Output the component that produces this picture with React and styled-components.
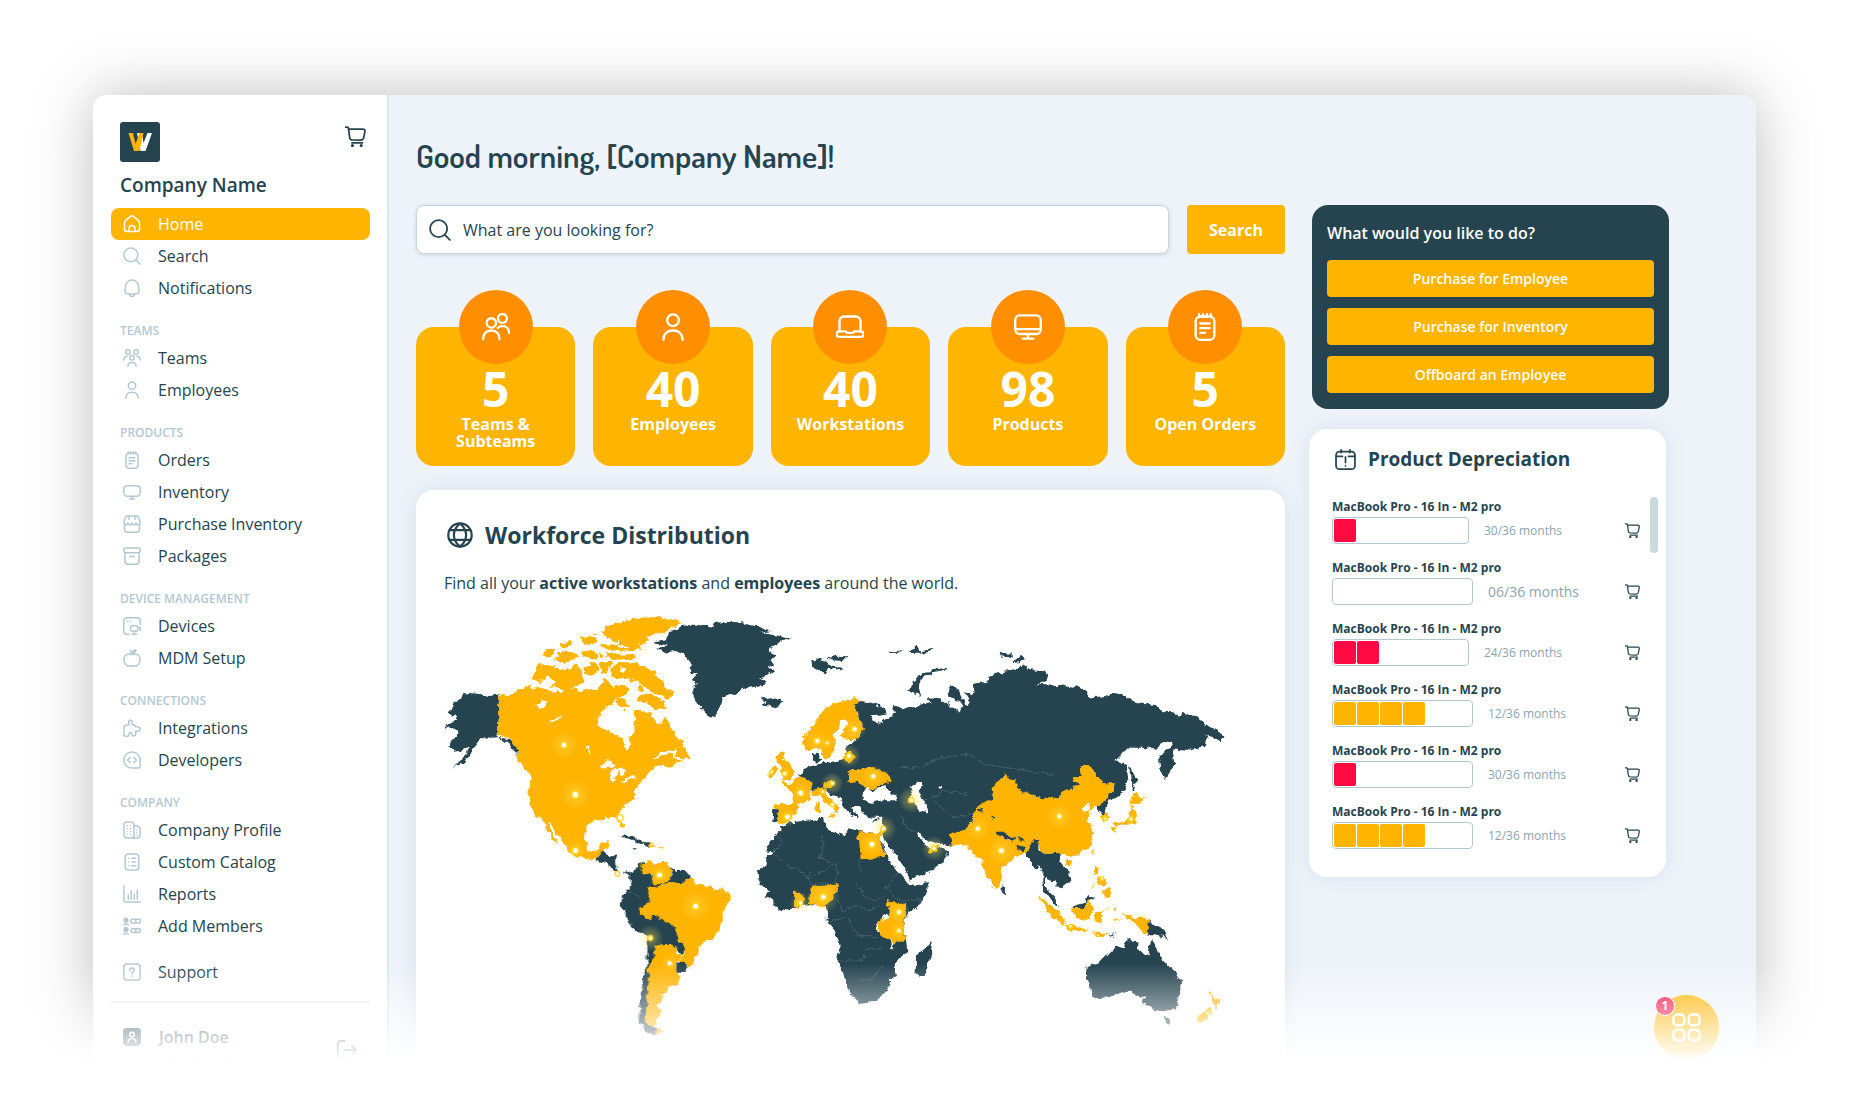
import React from "react";
import styled, { createGlobalStyle } from "styled-components";

const color = {
  ink: "#254450",
  amber: "#ffb400",
  orange: "#ff8f00",
  red: "#ff0a43",
  mist: "#b4c8d4",
  slate: "#8aa5b3",
  canvas: "#eef3fa",
};

const GlobalStyle = createGlobalStyle`
  *, *::before, *::after { box-sizing: border-box; }
  body {
    margin: 0;
    background: #fff;
    color: ${color.ink};
    font-family: "Open Sans", "Noto Sans", sans-serif;
    font-size: 16px;
  }
  h1, h2, p, ul { margin: 0; padding: 0; }
  ul { list-style: none; }
  button { font-family: inherit; border: 0; padding: 0; cursor: pointer; }
  svg { display: block; flex: none; }
`;

/* ---------- icons ---------- */

const Svg = ({ size = 18, stroke = 2, children }) => (
  <svg
    width={size}
    height={size}
    viewBox="0 0 24 24"
    fill="none"
    stroke="currentColor"
    strokeWidth={stroke}
    strokeLinecap="round"
    strokeLinejoin="round"
    aria-hidden="true"
  >
    {children}
  </svg>
);

const shapes = {
  home: (
    <>
      <path d="M2 10.5v8.2A3.3 3.3 0 0 0 5.300 22h13.400a3.300 3.300 0 0 0 3.300-3.300v-8.200a4 4 0 0 0-1.400-3L14.300 2.100a3.500 3.500 0 0 0-4.600 0L3.400 7.500a4 4 0 0 0-1.400 3Z" />
      <path d="M8 22v-4a4 4 0 0 1 8 0v4" />
    </>
  ),
  search: (
    <>
      <circle cx="10.500" cy="10.500" r="9.300" />
      <path d="m17.300 17.300 5.500 5.500" />
    </>
  ),
  bell: (
    <>
      <path d="M2.500 16.500C2.500 19 7 20 12 20s9.500-1 9.500-3.500c0-1.500-.8-2.500-.8-5.500C20.700 5 17 1.200 12 1.200S3.300 5 3.300 11c0 3-.8 4-.8 5.500Z" />
      <path d="M8.500 20.500a3.600 3.600 0 0 0 7 0" />
    </>
  ),
  teams: (
    <>
      <circle cx="6.500" cy="4" r="3" />
      <circle cx="17.500" cy="4" r="3" />
      <circle cx="12" cy="11.500" r="3" />
      <path d="M1 14.500c0-3 2-5 4.500-5M23 14.500c0-3-2-5-4.500-5M6.500 23c0-3.500 2-5 5.500-5s5.500 1.500 5.500 5" />
    </>
  ),
  person: (
    <>
      <circle cx="12" cy="6.200" r="5" />
      <path d="M3.800 23c0-5 3.200-8 8.200-8s8.200 3 8.200 8" />
    </>
  ),
  people: (
    <>
      <circle cx="8" cy="8.500" r="4" />
      <circle cx="17.500" cy="4.700" r="3.800" />
      <path d="M1 22.500c0-4.500 2.500-7.500 7-7.500s7 3 7 7.500M13.500 12.700c1-1 2.300-1.500 4-1.500 3.500 0 5.800 2.300 5.800 6" />
    </>
  ),
  orders: (
    <>
      <rect x="4" y="3" width="16" height="20" rx="4" />
      <path d="M7 1v2.500M10.300 1v2.500M13.700 1v2.500M17 1v2.500M8 9h8M8 13h8M8 17h4" />
    </>
  ),
  monitor: (
    <>
      <rect x="1" y="3.500" width="22" height="14" rx="4.500" />
      <path d="M12 17.500v3.500M8.500 21.300h7" />
    </>
  ),
  desktop: (
    <>
      <rect x="1" y="2" width="22" height="16" rx="4" />
      <path d="M1.500 13.800h21M12 18v4M7.500 22h9" />
    </>
  ),
  laptop: (
    <>
      <path d="M3 16V7a4 4 0 0 1 4-4h10a4 4 0 0 1 4 4v9" />
      <path d="M2.800 15.800h5.500l1.200 1.200h5l1.200-1.200h5.500a1.800 1.800 0 0 1 0 4.700H2.800a1.800 1.800 0 0 1 0-4.700Z" />
    </>
  ),
  shop: (
    <>
      <path d="M2 12v7a4 4 0 0 0 4 4h12a4 4 0 0 0 4-4v-7" />
      <path d="M5.500 1.200h13L21 3.500 22.800 10c0 2-1.300 3-2.800 3s-2.700-1-2.700-2.500c0 1.500-1.300 2.500-2.600 2.500S12 12 12 10.500C12 12 10.800 13 9.300 13s-2.600-1-2.600-2.500C6.700 12 5.500 13 4 13s-2.800-1-2.800-3L3 3.500ZM8 1.500V6M16 1.500V6" />
    </>
  ),
  box: (
    <>
      <rect x="1" y="1.200" width="22" height="6.500" rx="3" />
      <path d="M2.500 7.700V19a4 4 0 0 0 4 4h11a4 4 0 0 0 4-4V7.700M9 12.500h6" />
    </>
  ),
  devices: (
    <>
      <path d="M8 23H5a4 4 0 0 1-4-4V5a4 4 0 0 1 4-4h14a4 4 0 0 1 4 4v5M5 5.500h.5M9 5.500h.5" />
      <rect x="10" y="11.500" width="10" height="7.500" rx="3" />
      <path d="M15 19v4M12 23h6M20 14h3v4" />
    </>
  ),
  apple: (
    <path d="M12 7.500C9 6 1.200 6 1.200 14c0 5 3.300 9 7 9 1.600 0 2.300-.8 3.800-.8s2.200.8 3.800.8c3.700 0 7-4 7-9 0-8-7.800-8-10.800-6.500Zm0 0c0-1.800-.5-3-2.500-5.500M13 5c0-2.500 1.300-3.800 4-4 0 2.700-1.300 4-4 4Z" />
  ),
  puzzle: (
    <path d="M4.500 8H7c.8 0 1-.7.800-1.500C7 3.500 8 1.200 10 1.200s3 2.300 2.200 5.300c-.2.800 0 1.500.8 1.500h1.500A2.500 2.500 0 0 1 17 10.500c3-.8 6 .5 6 3s-3 3.500-6 2.500V20a2.700 2.700 0 0 1-4.500 1.800c-1-1 .3-4.300-2.500-4.300s-1.500 3.300-2.500 4.500A3.500 3.500 0 0 1 1.200 19.500V12A4 4 0 0 1 4.500 8Z" />
  ),
  code: (
    <>
      <path d="M12 1.200A10.800 10.800 0 1 0 12 22.800h7.500a3.300 3.300 0 0 0 3.300-3.300V12A10.800 10.800 0 0 0 12 1.200Z" />
      <path d="M9.500 8.500 6 12l3.500 3.500M14.500 8.500 18 12l-3.500 3.500" />
    </>
  ),
  building: (
    <>
      <rect x="1.200" y="1.200" width="13.500" height="21.600" rx="4" />
      <path d="M14.700 6.500H18a5 5 0 0 1 5 5V18a4.800 4.800 0 0 1-5 4.800h-6" />
      <path d="M5.500 6h.1M10 6h.1M5.500 10h.1M10 10h.1M5.500 14h.1M10 14h.1M5.500 18h.1M10 18h.1M18.700 11.500h.1M18.700 15h.1M18.700 18.500h.1" />
    </>
  ),
  list: (
    <>
      <rect x="3" y="1.200" width="18" height="21.600" rx="4" />
      <path d="M7.500 7h.1M7.500 12h.1M7.500 17h.1M12 7h5M12 12h5M12 17h5" />
    </>
  ),
  chart: <path d="M1.200 1v18.500a3 3 0 0 0 3 3H23M7 19v-6M11 19V7.500M15 19v-7M19 19V7" />,
  members: (
    <>
      <circle cx="4" cy="4" r="2.500" fill="currentColor" />
      <path d="M1 10.500c.5-2 5.500-2 6 0" />
      <rect x="10.500" y="3" width="13" height="5" rx="2.500" />
      <circle cx="4" cy="16.500" r="2.500" fill="currentColor" />
      <path d="M1 23c.5-2 5.500-2 6 0M17 3.500v4M17 16v4" />
      <rect x="10.500" y="15.500" width="13" height="5" rx="2.500" />
    </>
  ),
  help: (
    <>
      <rect x="1.200" y="1.200" width="21.600" height="21.600" rx="4" />
      <path d="M9 9.500C9 7.500 10.300 6.500 12 6.500s3 1 3 2.700c0 2.300-3 2.500-3 4.800M12 17.500v.1" />
    </>
  ),
  badge: (
    <>
      <rect x="1" y="1" width="22" height="22" rx="4" fill="currentColor" />
      <circle cx="12" cy="8.500" r="3" stroke="#fff" />
      <path d="M7 19c0-3 2-5 5-5s5 2 5 5" stroke="#fff" />
    </>
  ),
  logout: <path d="M9 2H6a4 4 0 0 0-4 4v12a4 4 0 0 0 4 4h3M9 12h13M17.500 7.500 22 12l-4.500 4.500" />,
  cart: (
    <>
      <path d="M.8 1.200h1.700c.8 0 1.300.5 1.400 1.300L5.300 13a3.500 3.500 0 0 0 3.400 3H18a3.500 3.500 0 0 0 3.400-2.800L22.900 5.500A2 2 0 0 0 21 3.500H4M8 19.200h12" />
      <circle cx="8.500" cy="22.300" r=".8" fill="currentColor" />
      <circle cx="18.500" cy="22.300" r=".8" fill="currentColor" />
    </>
  ),
  globe: (
    <>
      <circle cx="12" cy="12" r="10.800" />
      <path d="M12 1.200C4.500 7.500 4.500 16.500 12 22.800 19.500 16.500 19.500 7.500 12 1.200ZM2.500 7.500h19M2.500 16.500h19" />
    </>
  ),
  calendar: (
    <>
      <rect x="1.200" y="3" width="21.600" height="20" rx="4" />
      <path d="M7 1v3M17 1v3M1.500 8.500h7M15.500 8.500h7M12 9v6.500M12 19v.2" />
    </>
  ),
  grid: (
    <>
      <rect x="1.200" y="1.200" width="9" height="9" rx="3" />
      <rect x="13.800" y="1.200" width="9" height="9" rx="3" />
      <rect x="1.200" y="13.800" width="9" height="9" rx="3" />
      <rect x="13.800" y="13.800" width="9" height="9" rx="3" />
    </>
  ),
};

const Icon = ({ name, ...rest }) => <Svg {...rest}>{shapes[name]}</Svg>;

const Logo = () => (
  <svg width="40" height="40" viewBox="0 0 40 40" role="img" aria-label="Logo">
    <rect width="40" height="40" rx="3" fill={color.ink} />
    <path d="M17 11h5l1.500 10L27.500 11H32l-6.500 18h-5z" fill="#fff" />
    <path d="M8.500 11h4.500l2.500 11 4-11H23.500l-4 18h-5.500z" fill={color.amber} />
  </svg>
);

/* ---------- shell ---------- */

const Stage = styled.div`
  position: relative;
  display: flex;
  min-height: 100vh;
  padding: 95px 94px 0 93px;
  overflow: hidden;
`;

const Frame = styled.div`
  position: relative;
  flex: 1;
  display: flex;
  min-width: 0;
  background: ${color.canvas};
  border-radius: 14px 14px 0 0;
  box-shadow: 0 0 60px rgba(0, 0, 0, 0.26);
`;

const BottomFade = styled.div`
  position: absolute;
  inset: auto 0 0 0;
  height: 130px;
  background: linear-gradient(rgba(255, 255, 255, 0), #fff 76%);
  pointer-events: none;
`;

/* ---------- sidebar ---------- */

const Sidebar = styled.aside`
  flex: none;
  width: 296px;
  padding: 27px 17px 0 18px;
  background: #fff;
  border-right: 2px solid #dce6ed;
  border-radius: 14px 0 0 0;
`;

const Brand = styled.div`
  display: flex;
  justify-content: space-between;
  align-items: flex-start;
  padding: 0 4px 0 9px;
`;

const IconButton = styled.button`
  display: grid;
  place-items: center;
  padding: ${(p) => p.$pad || 0}px 0;
  background: none;
  color: ${color.ink};
`;

const CompanyName = styled.p`
  padding: 11px 9px;
  font-size: 19px;
  font-weight: 550;
  line-height: 24px;
`;

const GroupLabel = styled.h2`
  padding: 19px 9px 3px;
  color: ${color.mist};
  font-size: 12px;
  font-weight: 550;
  line-height: 16px;
  text-transform: uppercase;
`;

const NavLink = styled.a`
  display: flex;
  align-items: center;
  gap: 17px;
  height: 32px;
  padding: 0 12px;
  border-radius: 8px;
  background: ${(p) => (p.$active ? color.amber : "none")};
  color: ${(p) => (p.$active ? "#fff" : color.ink)};
  text-decoration: none;

  svg { color: ${(p) => (p.$active ? "#fff" : color.mist)}; }
`;

const SupportArea = styled.div`
  padding: 14px 0 13px;
  border-bottom: 2px solid #e3ebf0;
`;

const Account = styled.div`
  display: flex;
  gap: 18px;
  padding: 21px 12px 0;

  > svg { margin-top: 4px; }
`;

const AccountText = styled.div`
  flex: 1;
  line-height: 26px;
`;

const AccountName = styled.p`
  font-weight: 600;
`;

const AccountMail = styled.p`
  font-size: 14px;
`;

const groups = [
  { items: [["home", "Home"], ["search", "Search"], ["bell", "Notifications"]] },
  { label: "Teams", items: [["teams", "Teams"], ["person", "Employees"]] },
  {
    label: "Products",
    items: [["orders", "Orders"], ["monitor", "Inventory"], ["shop", "Purchase Inventory"], ["box", "Packages"]],
  },
  { label: "Device management", items: [["devices", "Devices"], ["apple", "MDM Setup"]] },
  { label: "Connections", items: [["puzzle", "Integrations"], ["code", "Developers"]] },
  {
    label: "Company",
    items: [["building", "Company Profile"], ["list", "Custom Catalog"], ["chart", "Reports"], ["members", "Add Members"]],
  },
];

const NavItem = ({ icon, label, active }) => (
  <NavLink href="#" $active={active} aria-current={active ? "page" : undefined}>
    <Icon name={icon} />
    {label}
  </NavLink>
);

const SideNav = () => (
  <Sidebar>
    <Brand>
      <Logo />
      <IconButton $pad={4} aria-label="Cart">
        <Icon name="cart" size={21} />
      </IconButton>
    </Brand>
    <CompanyName>Company Name</CompanyName>
    <nav>
      {groups.map((group, i) => (
        <React.Fragment key={i}>
          {group.label && <GroupLabel>{group.label}</GroupLabel>}
          <ul>
            {group.items.map(([icon, label]) => (
              <li key={label}>
                <NavItem icon={icon} label={label} active={label === "Home"} />
              </li>
            ))}
          </ul>
        </React.Fragment>
      ))}
      <SupportArea>
        <NavItem icon="help" label="Support" />
      </SupportArea>
    </nav>
    <Account>
      <Icon name="badge" />
      <AccountText>
        <AccountName>John Doe</AccountName>
        <AccountMail>john@mail.com</AccountMail>
      </AccountText>
      <IconButton aria-label="Log out">
        <Icon name="logout" size={22} />
      </IconButton>
    </Account>
  </Sidebar>
);

/* ---------- main ---------- */

const Main = styled.main`
  flex: 1;
  display: flex;
  flex-direction: column;
  min-width: 0;
  padding: 41px 87px 0 27px;
`;

const Greeting = styled.h1`
  margin-bottom: 29px;
  font-family: Dosis, Lato, sans-serif;
  font-size: 32px;
  font-weight: 600;
  line-height: 40px;
`;

const Columns = styled.div`
  flex: 1;
  display: grid;
  grid-template-columns: minmax(0, 1fr) 360px;
  gap: 24px;
`;

const Column = styled.div`
  display: flex;
  flex-direction: column;
`;

const SearchForm = styled.form`
  display: flex;
  gap: 18px;
`;

const SearchBox = styled.label`
  flex: 1;
  display: flex;
  align-items: center;
  gap: 12px;
  height: 49px;
  padding: 0 12px;
  background: #fff;
  border: 1px solid #c6d6de;
  border-radius: 8px;
  box-shadow: 0 1px 4px rgba(37, 68, 80, 0.18);
`;

const SearchInput = styled.input`
  flex: 1;
  border: 0;
  outline: 0;
  padding: 0;
  background: none;
  font: inherit;
  color: ${color.ink};

  &::placeholder { color: ${color.ink}; opacity: 1; }
`;

const SearchButton = styled.button`
  width: 98px;
  height: 49px;
  border-radius: 4px;
  background: ${color.amber};
  color: #fff;
  font-size: 16px;
  font-weight: 700;
`;

const Stats = styled.ul`
  display: grid;
  grid-template-columns: repeat(5, 1fr);
  gap: 18px;
  margin: 73px 0 24px;
`;

const StatCard = styled.li`
  display: flex;
  flex-direction: column;
  align-items: center;
  height: 139px;
  border-radius: 18px;
  background: ${color.amber};
  color: #fff;
  font-weight: 700;
  text-align: center;
`;

const StatIcon = styled.span`
  display: grid;
  place-items: center;
  width: 74px;
  height: 74px;
  margin-top: -37px;
  border-radius: 50%;
  background: ${color.orange};
`;

const StatValue = styled.strong`
  font-size: 48px;
  font-weight: 700;
  line-height: 50px;
`;

const StatLabel = styled.span`
  width: 120px;
  margin-top: 2px;
  line-height: 17px;
`;

const stats = [
  ["people", "5", "Teams & Subteams"],
  ["person", "40", "Employees"],
  ["laptop", "40", "Workstations"],
  ["desktop", "98", "Products"],
  ["orders", "5", "Open Orders"],
];

const Card = styled.section`
  background: #fff;
  border-radius: 18px;
  box-shadow: 0 0 20px rgba(37, 68, 80, 0.1);
`;

const MapCard = styled(Card)`
  flex: 1;
  padding: 29px 28px 0;
  border-radius: 18px 18px 0 0;

  > svg { width: 100%; max-width: 783px; height: auto; }
`;

const CardTitle = styled.h2`
  display: flex;
  align-items: center;
  gap: 12px;
  padding-left: 3px;
  font-size: ${(p) => p.$size}px;
  font-weight: 700;
  line-height: 32px;
`;

const Intro = styled.p`
  margin: 20px 0;
  line-height: 24px;
`;

/* ---------- world map ---------- */

// Every sheet holds outlines in its own local units; x and y place the sheet on the map.
const sheets = [
  {
    x: 0,
    y: 0,
    shapes: [
      ["ink", "298,640 270,645 235,638 205,636 185,650 165,660 158,680 143,690 160,705 172,712 170,720 155,722 135,738 150,745 172,742 175,752 155,775 142,795 160,812 185,808 208,795 200,820 180,840 158,862 190,848 215,815 228,785 245,768 275,770 300,768 325,775 345,795 357,815 340,812 325,790 310,778 290,765"],
      ["amber", "298,640 325,645 345,634 365,625 385,612 395,625 415,618 440,628 475,634 510,622 540,630 560,620 585,628 605,612 615,590 628,600 640,622 655,612 680,612 688,628 670,645 650,655 632,672 610,685 590,725 602,740 635,755 665,768 670,795 683,808 692,790 690,770 705,750 700,730 708,715 702,695 730,688 755,698 765,722 785,728 795,705 812,740 830,765 852,780 848,800 820,806 785,812 755,838 790,822 822,818 818,835 848,838 815,856 790,858 780,848 750,870 725,905 705,925 705,950 668,985 652,1005 672,1035 663,1042 650,1020 640,1008 615,1008 608,1018 580,1018 560,1035 555,1070 560,1102 575,1112 595,1105 605,1083 627,1080 618,1108 590,1130 585,1137 560,1135 525,1125 503,1115 500,1095 470,1058 450,1026 444,1026 450,1045 460,1065 475,1092 455,1075 445,1055 432,1025 423,1010 405,1005 388,970 385,935 388,900 390,882 370,855 352,845 355,815 325,770 290,762"],
      ["amber", "834,800 852,796 872,835 845,832 824,825"],
      ["amber", "845,425 820,415 770,408 720,410 680,418 640,430 620,435 605,455 625,470 640,482 660,475 648,490 690,500 675,508 720,508 725,485 745,478 740,465 790,455 815,440"],
      ["amber", "620,514 650,522 705,518 708,532 640,537 622,527"],
      ["amber", "598,492 640,490 660,500 715,504 680,512 616,506"],
      ["amber", "582,455 592,460 586,466 578,462"],
      ["amber", "540,470 562,464 590,478 582,490 556,496"],
      ["amber", "545,510 575,503 592,528 575,534 552,528"],
      ["amber", "596,514 612,520 610,532 596,526"],
      ["amber", "424,524 446,504 468,504 462,518 440,530"],
      ["amber", "475,492 510,480 516,495 490,502"],
      ["amber", "470,516 495,508 522,512 535,530 512,534 490,547 458,538 482,530"],
      ["amber", "410,552 437,548 465,556 462,570 435,592 415,602 398,590"],
      ["amber", "440,585 455,565 500,568 530,548 545,570 557,605 520,622 490,629 450,614 465,600"],
      ["amber", "552,558 580,543 596,560 580,584 556,578"],
      ["amber", "600,543 635,543 620,578 600,574"],
      ["amber", "632,562 660,543 715,546 745,563 790,600 800,625 825,635 800,655 770,637 740,624 730,607 700,602 690,592 650,597 632,582"],
      ["amber", "706,652 730,640 750,638 790,658 800,684 765,687 740,664 716,662"],
      ["amber", "710,618 726,610 732,626 716,630"],
      ["amber", "645,655 672,655 692,674 655,674"],
      ["amber", "662,684 676,682 672,692"],
      ["white", "664,556 678,560 668,574 660,570"],
      ["white", "405,672 430,658 446,668 420,684"],
      ["white", "448,722 490,702 470,722"],
      ["white", "556,794 565,798 572,824 564,815"],
      ["white", "598,857 622,838 646,855 625,860"],
      ["white", "630,898 636,870 655,862 650,880 640,902"],
      ["white", "655,862 675,868 672,884 660,880"],
      ["white", "660,902 700,882 706,888 672,904"],
      ["ink", "760,482 800,474 810,450 850,435 895,430 945,438 940,425 990,422 1040,425 1080,435 1108,450 1085,456 1120,462 1172,470 1140,480 1120,495 1105,515 1128,523 1110,535 1122,552 1105,560 1122,572 1100,582 1080,590 1100,602 1075,615 1025,625 1005,640 970,648 965,670 950,690 943,708 920,700 900,680 878,645 880,620 898,605 875,598 890,580 870,575 868,540 850,520 825,510 790,515 768,503 800,494"],
      ["ink", "1082,655 1095,648 1105,656 1140,650 1153,662 1140,672 1118,680 1090,672 1100,662"],
    ],
  },
  {
    x: 60,
    y: 840,
    shapes: [
      ["ink", "527,300 540,280 553,268 560,282 590,288 588,320 596,332 585,332 570,318 560,305"],
      ["ink", "600,232 615,222 640,226 682,246 660,245 625,232"],
      ["ink", "603,342 615,328 630,334 634,348 618,336"],
      ["ink", "674,245 688,243 688,258 674,256"],
      ["amber", "688,243 708,252 690,262"],
      ["amber", "714,256 728,256 726,260 714,260"],
      ["ink", "638,262 650,261 648,265"],
      ["ink", "672,298 650,315 642,330 630,335 632,360 625,380 605,410 603,440 620,465 640,505 665,515 682,530 682,600 668,660 662,720 656,780 670,802 700,824 715,818 700,795 688,760 692,700 700,600 715,560 770,560 785,580 796,560 790,500 800,400 740,330 668,320"],
      ["ink", "750,318 770,330 800,330 812,345 800,360 760,370"],
      ["amber", "660,310 685,300 700,306 745,306 752,330 752,355 735,372 700,372 695,345 662,334"],
      ["amber", "700,378 735,372 760,365 790,362 815,345 825,370 865,375 885,385 905,382 925,395 935,410 930,425 912,445 905,460 905,490 885,528 860,535 838,555 835,580 810,620 800,612 775,600 792,575 795,550 770,540 770,505 750,485 720,475 715,460 685,472 660,462 657,440 685,425 685,380"],
      ["amber", "710,552 735,548 770,562 770,580 785,580 772,605 772,635 782,650 770,672 745,675 742,695 725,700 728,715 712,735 722,755 705,792 675,790 680,720 685,620 697,590"],
      ["amber", "708,800 733,812 710,818"],
      ["ink", "772,605 790,602 804,615 795,633 772,632"],
    ],
  },
  {
    x: 1020,
    y: 330,
    shapes: [
      ["ink", "120,710 150,694 190,690 250,683 252,705 285,725 315,732 325,712 355,720 400,725 412,738 430,760 440,790 460,825 490,860 505,882 525,885 567,870 560,905 540,940 500,975 488,1000 498,1045 502,1085 470,1110 462,1130 468,1155 450,1165 445,1195 420,1225 385,1238 355,1243 345,1225 320,1185 310,1145 290,1110 300,1070 285,1020 260,990 262,955 245,940 210,940 165,950 130,960 100,945 100,925 70,915 90,902 60,880 50,838 75,832 80,800 105,782 75,778 100,740 122,720"],
      ["ink", "567,1053 575,1080 560,1140 545,1160 527,1150 528,1090 550,1080"],
      ["amber", "355,722 400,725 425,722 428,738 414,738 440,790 430,798 362,802"],
      ["amber", "213,880 240,882 290,878 290,895 275,930 245,950 230,940 207,935"],
      ["amber", "162,905 187,905 192,935 172,952 162,948"],
      ["amber", "440,930 470,936 498,935 498,975 488,1000 497,1047 460,1057 420,1030 410,1000 425,980 450,965"],
      ["white", "426,975 445,966 442,982 430,988"],
      ["white", "410,1000 415,1005 422,1030 415,1022"],
      ["white", "450,1045 456,1050 460,1078 454,1068"],
      ["ink", "345,345 355,333 390,335 435,352 440,370 415,375 392,372 400,390 420,395 450,372 465,368 455,345 472,345 490,355 530,345 575,335 560,322 600,325 620,335 640,352 655,365 670,345 660,330 625,320 622,295 640,278 655,290 665,320 680,345 690,330 672,300 700,310 720,290 745,285 740,270 780,250 790,580 765,590 735,630 715,640 720,655 700,665 700,690 680,712 635,728 645,765 615,760 590,755 570,755 550,740 540,725 530,728 545,750 562,766 580,778 595,765 622,785 610,815 570,840 510,868 495,835 470,800 445,765 432,740 428,710 430,680 395,680 365,665 362,645 335,645 340,660 355,680 345,682 330,665 315,655 300,625 270,610 250,595 240,600 215,598 190,575 178,556 190,535 215,525 240,518 290,510 305,505 318,480 320,460 350,450 370,410 358,380"],
      ["ink", "215,490 232,485 238,500 247,505 232,516 220,510"],
      ["white", "370,602 378,588 400,605 425,582 440,578 435,592 445,600 468,615 470,628 430,628 395,635 372,630"],
      ["white", "508,588 530,575 550,576 548,588 533,598 550,622 560,640 565,665 535,658 522,632"],
      ["white", "594,585 608,588 604,600"],
      ["white", "706,580 742,574 742,578 712,590"],
      ["amber", "188,440 205,425 235,380 250,352 300,335 345,318 362,330 345,345 358,380 372,415 352,448 320,447 302,435 322,400 318,385 303,388 298,412 277,430 287,462 270,500 255,507 240,475 232,467 200,482 190,465"],
      ["amber", "305,497 325,482 347,495 332,515 312,508"],
      ["amber", "110,490 130,483 125,500 140,510 150,530 168,545 150,560 120,574 132,552 120,540 128,525 110,510"],
      ["amber", "88,532 105,525 112,545 95,560 82,555"],
      ["amber", "125,575 150,576 180,556 218,572 215,590 205,600 212,625 180,635 160,645 158,605"],
      ["amber", "97,637 165,640 178,650 165,662 155,685 143,697 115,698 110,685 115,655 100,650"],
      ["ink", "100,653 115,655 110,697 97,695"],
      ["amber", "205,600 240,590 262,592 255,608 290,640 300,652 290,670 282,648 262,640 240,615 215,615"],
      ["amber", "262,672 283,670 280,682"],
      ["amber", "228,632 238,632 240,665 226,665"],
      ["amber", "250,580 270,567 287,575 270,592 250,588"],
      ["amber", "325,538 345,537 400,528 450,552 448,570 415,580 412,592 400,598 385,595 370,580 350,575 322,572"],
      ["ink", "395,690 418,683 405,694"],
      ["amber", "422,705 434,702 434,725 424,725"],
      ["amber", "562,770 590,772 598,757 594,782 568,785"],
      ["amber", "504,620 520,618 522,635 508,636"],
      ["ink", "210,212 232,205 260,212 305,232 300,238 265,230 252,250 222,232"],
      ["ink", "260,202 290,194 322,196 310,210 275,208"],
      ["ink", "620,235 590,242 550,258 532,285 545,312 505,302 520,270 550,244 615,230"],
      ["ink", "445,182 485,178 480,184 455,187"],
      ["ink", "508,176 530,168 545,180 585,172 560,184 520,186"],
    ],
  },
  {
    x: 1740,
    y: 420,
    shapes: [
      ["ink", "0,185 30,180 25,165 75,152 110,148 125,130 150,145 190,148 205,165 200,180 165,193 200,190 240,193 280,200 290,192 320,210 330,232 380,228 395,215 435,222 445,235 485,248 525,252 540,270 590,275 600,288 605,275 650,290 700,325 735,345 722,362 700,345 680,342 675,375 650,380 625,390 580,385 580,400 583,430 555,475 540,440 537,410 555,395 575,365 545,365 520,385 490,380 445,380 405,420 440,432 445,480 430,515 400,535 385,540 370,577 352,572 350,550 200,560 -20,560 -20,190"],
      ["ink", "450,430 458,450 470,485 460,490 467,512 458,505"],
      ["amber", "-90,638 -40,622 -20,600 -20,575 -5,550 15,540 40,535 35,500 75,460 105,480 108,500 145,520 205,532 235,528 255,510 300,490 275,480 280,465 305,465 302,432 330,432 350,465 375,487 405,487 400,512 388,515 388,530 350,555 325,570 335,580 318,595 335,615 340,650 325,685 300,700 265,705 240,700 225,692 190,700 178,680 165,650 160,690 135,700 105,705 65,745 60,798 45,805 20,765 0,710 -20,700 -40,672 -85,675"],
      ["white", "302,562 328,550 325,572 310,575"],
      ["ink", "50,632 62,632 104,652 104,660 80,655 55,644"],
      ["ink", "114,650 132,653 130,660 116,658"],
      ["ink", "112,668 134,675 125,698 116,690"],
      ["ink", "30,584 44,588 38,596"],
      ["ink", "-6,560 6,565 4,572 -6,570"],
      ["ink", "165,650 178,655 175,680 190,700 225,692 242,700 238,722 265,755 268,780 240,802 225,785 205,775 195,770 195,795 215,820 230,835 237,858 210,838 190,805 190,760 178,735 165,745 155,722 135,700 150,680"],
      ["ink", "65,795 78,805 76,823 65,817"],
      ["amber", "258,716 273,718 270,730 258,728"],
      ["amber", "334,692 345,678 342,703"],
      ["amber", "365,578 380,572 388,592 372,605"],
      ["amber", "460,515 492,532 475,548 452,548"],
      ["amber", "455,552 468,575 465,607 440,608 402,618 398,608 430,600 450,590"],
      ["amber", "395,618 408,620 402,634"],
      ["amber", "342,732 355,738 352,765 342,762"],
      ["amber", "352,768 370,765 385,790 370,800 358,785"],
      ["amber", "360,815 388,800 393,830 375,826"],
      ["amber", "328,806 342,787 338,800"],
      ["amber", "172,825 200,842 235,875 258,895 252,912 215,885 190,850"],
      ["amber", "252,912 290,915 325,930 300,932 262,922"],
      ["amber", "330,933 352,935 390,936 360,945"],
      ["ink", "275,858 310,845 325,822 342,832 320,842 310,862 285,862"],
      ["amber", "275,862 310,860 325,838 341,862 325,898 290,892"],
      ["amber", "346,872 386,862 362,876 372,888 362,890 362,908 347,895"],
      ["amber", "402,860 410,866 408,876"],
      ["amber", "396,895 425,896 412,900"],
      ["amber", "430,880 455,885 455,895 480,888 502,898 505,940 485,932 470,910 435,892"],
      ["ink", "502,898 540,915 555,945 570,958 530,940 505,944"],
      ["ink", "385,945 408,934 395,944"],
      ["ink", "440,958 475,965 475,985 505,1007 512,960 518,958 525,980 540,1000 550,1020 580,1050 603,1080 600,1120 585,1165 550,1170 515,1162 505,1150 485,1142 495,1125 480,1132 455,1112 420,1112 385,1130 345,1135 335,1125 330,1095 318,1065 320,1035 365,1018 390,990 410,975 430,982"],
      ["ink", "550,1188 573,1192 563,1213"],
      ["amber", "682,1107 700,1130 725,1135 705,1163 697,1145"],
      ["amber", "690,1158 695,1175 675,1200 648,1202 655,1185"],
      ["ink", "58,100 95,97 95,110 75,110"],
      ["ink", "98,124 120,105 138,118"],
    ],
  },
];

const borders =
  "M1120 1110 1150 1085 1130 1060M1120 1120 1180 1160 1230 1195 1310 1145M1230 1170 1230 1210M1265 1060 1270 1090 1260 1130 1312 1155 1315 1180 1300 1215M1380 1130 1380 1180M1370 1205 1385 1240 1425 1260 1450 1245M1500 1165 1460 1220 1490 1255 1560 1260M1310 1250 1330 1290 1370 1270 1400 1290 1440 1270M1290 1320 1340 1310 1370 1360 1430 1370M1310 1440 1380 1440 1400 1410 1450 1400M1380 1500 1420 1490 1450 1450M1500 860 1560 860 1620 830 1700 820 1760 850 1850 865 1960 880M1560 960 1640 930 1700 940M1600 960 1660 1010 1720 1000M1500 1000 1520 1040 1560 1060M660 1245 690 1230 720 1250";

// [x, y, dot radius, glow radius]
const beacons = [
  [492, 792, 9, 42], [526, 941, 10, 46], [660, 1010, 9, 20], [526, 1109, 9, 30], [652, 1178, 7, 12],
  [779, 1182, 9, 34], [887, 1276, 9, 46], [751, 1371, 7, 40], [809, 1447, 8, 26], [756, 1091, 4, 12],
  [1252, 780, 8, 28], [1282, 786, 5, 20], [1364, 745, 8, 34], [1347, 825, 7, 36], [1115, 873, 5, 14],
  [1154, 878, 7, 18], [1202, 936, 9, 30], [1162, 1008, 9, 30], [1297, 907, 6, 34], [1268, 932, 5, 16],
  [1297, 971, 6, 16], [1420, 886, 8, 34], [1534, 957, 7, 40], [1450, 1043, 7, 40], [1416, 1090, 9, 34],
  [1602, 1102, 7, 38], [1270, 1248, 9, 50], [1201, 1266, 7, 32], [1497, 1294, 8, 34], [1497, 1349, 7, 28],
  [1733, 1043, 8, 36], [1804, 1109, 9, 42], [1978, 1006, 8, 40], [2116, 1013, 5, 14], [2193, 1014, 6, 16],
  [2106, 1193, 5, 14], [2011, 1336, 5, 14], [2424, 1596, 5, 12],
];

const mapFill = { ink: color.ink, amber: color.amber, white: "#fff" };

const WorldMap = () => (
  <svg viewBox="132 402 2349 1270" role="img" aria-label="World map of active workstations and employees">
    <defs>
      <filter id="coast" x="0" y="0" width="100%" height="100%" colorInterpolationFilters="sRGB">
        <feTurbulence type="fractalNoise" baseFrequency="0.05" numOctaves="3" seed="4" />
        <feDisplacementMap in="SourceGraphic" scale="20" xChannelSelector="R" yChannelSelector="G" />
      </filter>
      <radialGradient id="glow">
        <stop offset="0" stopColor="#ffe040" stopOpacity=".8" />
        <stop offset=".35" stopColor="#ffe14d" stopOpacity=".3" />
        <stop offset="1" stopColor="#ffe680" stopOpacity="0" />
      </radialGradient>
    </defs>
    <g filter="url(#coast)">
      {sheets.map((sheet, i) => (
        <g key={i} transform={`translate(${sheet.x} ${sheet.y})`}>
          {sheet.shapes.map(([fill, points], j) => (
            <polygon key={j} points={points} fill={mapFill[fill]} />
          ))}
        </g>
      ))}
      <path d={borders} fill="none" stroke="#fff" strokeOpacity=".16" strokeWidth="3" />
    </g>
    {beacons.map(([x, y, r, glow], i) => (
      <g key={i}>
        <circle cx={x} cy={y} r={glow} fill="url(#glow)" />
        <circle cx={x} cy={y} r={r} fill="#fff" stroke="#ffd52e" strokeWidth="4" />
      </g>
    ))}
  </svg>
);

/* ---------- right column ---------- */

const Aside = styled(Column)`
  gap: 20px;
`;

const QuickActions = styled.section`
  align-self: flex-end;
  display: flex;
  flex-direction: column;
  gap: 11px;
  width: 357px;
  padding: 16px 15px;
  border-radius: 16px;
  background: ${color.ink};
`;

const QuickTitle = styled.h2`
  margin-bottom: 4px;
  color: #fff;
  font-size: 16px;
  font-weight: 650;
  line-height: 24px;
`;

const QuickButton = styled.button`
  height: 37px;
  border-radius: 4px;
  background: ${color.amber};
  color: #fff;
  font-size: 14px;
  font-weight: 650;
`;

const DepreciationCard = styled(Card)`
  align-self: flex-start;
  width: 357px;
  padding: 14px 8px 28px 23px;
`;

const DepreciationBody = styled.div`
  display: flex;
  justify-content: space-between;
  margin-top: 22px;
`;

const DeviceList = styled.ul`
  flex: 1;
  display: flex;
  flex-direction: column;
  gap: 14px;
`;

const DeviceName = styled.p`
  font-size: 12px;
  font-weight: 700;
  line-height: 20px;
`;

const DeviceLine = styled.div`
  display: flex;
  align-items: center;
  gap: 15px;
  height: 27px;
  padding-right: 10px;
`;

const Meter = styled.div`
  display: flex;
  gap: 1px;
  width: ${(p) => p.$width}px;
  height: 27px;
  padding: 1px;
  border: 1px solid ${color.mist};
  border-radius: 4px;
`;

const Segment = styled.span`
  width: 22px;
  border-radius: 2px;
  background: ${(p) => p.$tone};
`;

const Months = styled.span`
  flex: 1;
  color: ${color.slate};
  font-size: ${(p) => p.$size}px;
`;

const ScrollThumb = styled.div`
  width: 8px;
  height: 56px;
  border-radius: 4px;
  background: #cbd8de;
`;

const devices = [
  { months: "30/36", filled: 1, tone: color.red, width: 137, size: 12 },
  { months: "06/36", filled: 0, tone: color.red, width: 141, size: 14 },
  { months: "24/36", filled: 2, tone: color.red, width: 137, size: 12 },
  { months: "12/36", filled: 4, tone: color.amber, width: 141, size: 12 },
  { months: "30/36", filled: 1, tone: color.red, width: 141, size: 12 },
  { months: "12/36", filled: 4, tone: color.amber, width: 141, size: 12 },
];

const Device = ({ months, filled, tone, width, size }) => (
  <li>
    <DeviceName>MacBook Pro - 16 In - M2 pro</DeviceName>
    <DeviceLine>
      <Meter $width={width} aria-hidden="true">
        {Array.from({ length: filled }, (_, i) => (
          <Segment key={i} $tone={tone} />
        ))}
      </Meter>
      <Months $size={size}>{months} months</Months>
      <IconButton aria-label="Buy a replacement">
        <Icon name="cart" size={15} />
      </IconButton>
    </DeviceLine>
  </li>
);

const AppsButton = styled.button`
  position: absolute;
  right: 37px;
  bottom: 33px;
  display: grid;
  place-items: center;
  width: 65px;
  height: 65px;
  border-radius: 50%;
  background: ${color.amber};
  color: #fff;
`;

const AppsBadge = styled.span`
  position: absolute;
  top: 1px;
  left: 1px;
  width: 20px;
  height: 20px;
  border: 1px solid #fff;
  border-radius: 50%;
  background: ${color.red};
  font-size: 12px;
  font-weight: 700;
  line-height: 18px;
`;

export default function App() {
  return (
    <>
      <GlobalStyle />
      <Stage>
        <Frame>
          <SideNav />
          <Main>
            <Greeting>Good morning, [Company Name]!</Greeting>
            <Columns>
              <Column>
                <SearchForm onSubmit={(e) => e.preventDefault()}>
                  <SearchBox>
                    <Icon name="search" size={22} />
                    <SearchInput type="text" placeholder="What are you looking for?" aria-label="What are you looking for?" />
                  </SearchBox>
                  <SearchButton type="submit">Search</SearchButton>
                </SearchForm>
                <Stats>
                  {stats.map(([icon, value, label]) => (
                    <StatCard key={label}>
                      <StatIcon>
                        <Icon name={icon} size={28} />
                      </StatIcon>
                      <StatValue>{value}</StatValue>
                      <StatLabel>{label}</StatLabel>
                    </StatCard>
                  ))}
                </Stats>
                <MapCard>
                  <CardTitle $size={23}>
                    <Icon name="globe" size={26} />
                    Workforce Distribution
                  </CardTitle>
                  <Intro>
                    Find all your <b>active workstations</b> and <b>employees</b> around the world.
                  </Intro>
                  <WorldMap />
                </MapCard>
              </Column>
              <Aside>
                <QuickActions>
                  <QuickTitle>What would you like to do?</QuickTitle>
                  <QuickButton>Purchase for Employee</QuickButton>
                  <QuickButton>Purchase for Inventory</QuickButton>
                  <QuickButton>Offboard an Employee</QuickButton>
                </QuickActions>
                <DepreciationCard>
                  <CardTitle $size={19}>
                    <Icon name="calendar" size={21} />
                    Product Depreciation
                  </CardTitle>
                  <DepreciationBody>
                    <DeviceList>
                      {devices.map((device, i) => (
                        <Device key={i} {...device} />
                      ))}
                    </DeviceList>
                    <ScrollThumb />
                  </DepreciationBody>
                </DepreciationCard>
              </Aside>
            </Columns>
          </Main>
          <AppsButton aria-label="Open apps">
            <Icon name="grid" size={29} />
            <AppsBadge>1</AppsBadge>
          </AppsButton>
        </Frame>
        <BottomFade />
      </Stage>
    </>
  );
}
